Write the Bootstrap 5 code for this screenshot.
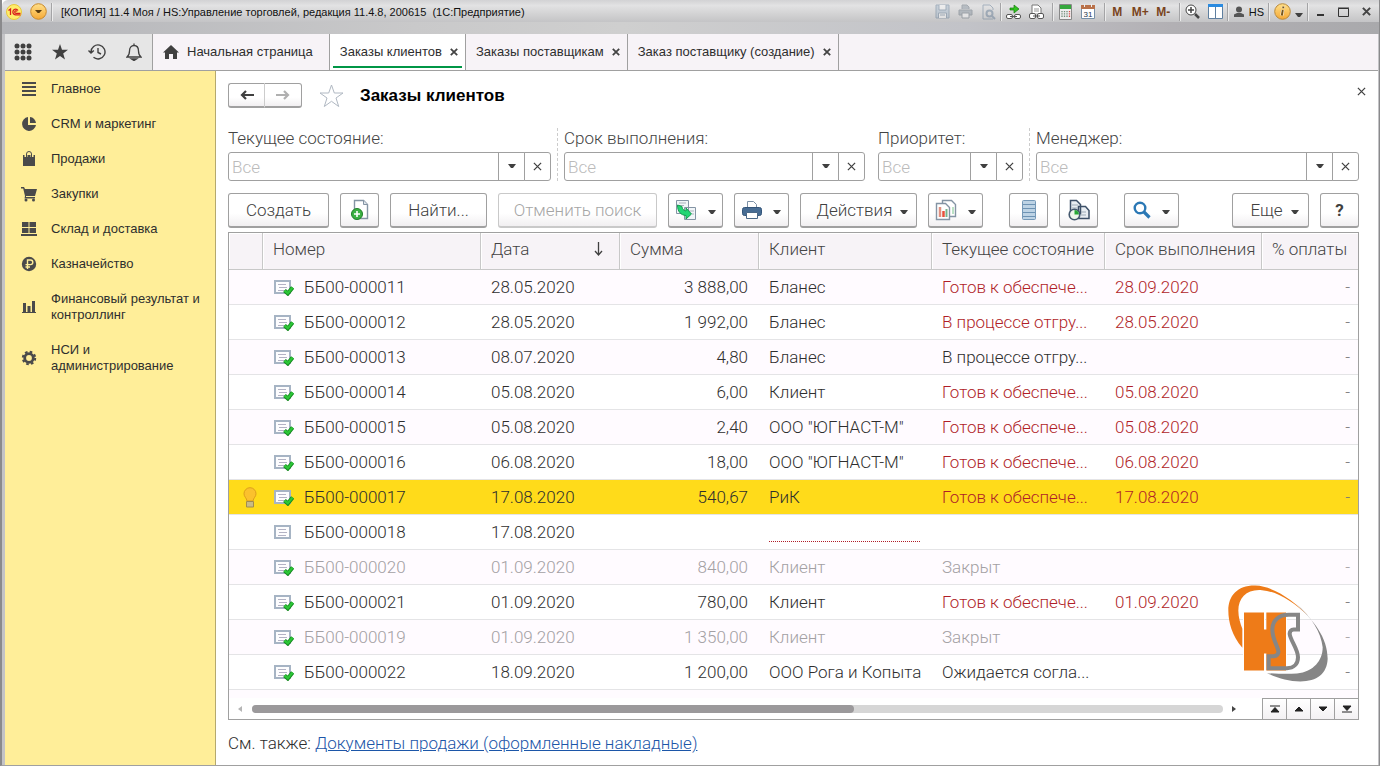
<!DOCTYPE html>
<html lang="ru">
<head>
<meta charset="utf-8">
<meta name="viewport" content="width=device-width, initial-scale=1">
<title>Заказы клиентов</title>
<link href="https://cdn.jsdelivr.net/npm/bootstrap@5.3.0/dist/css/bootstrap.min.css" rel="stylesheet">
<style>
:root{--line:#a0a0a0;--ink:#2e2e2e;--soft:#f7f3f7;--tint:#fffbff}
body{font-family:Roboto,"Liberation Sans",sans-serif;font-size:17px;font-weight:300;line-height:20px;color:var(--ink);background:#fff}
svg{display:block;flex:none}
.window{min-height:100vh;border-left:2px solid #8a8a8c;border-right:1px solid #8a8a8c;border-bottom:1px solid var(--line)}
.caption-bar{height:22px;background:linear-gradient(#d2d2d4,#e2e2e3 25%,#d0d0d1 70%,#c4c4c6);font:11px/22px "Liberation Sans",sans-serif;color:#111;padding:1px 1px 0 4px;border-top-left-radius:6px}
.caption-bar button,.plain{border:0;background:none;padding:0;color:inherit;display:flex;align-items:center;justify-content:center}
.caption-bar .tool{width:23px;height:22px}
.caption-bar .memo{font-weight:700;font-size:12px;color:#7a4420}
.caption-bar .rule{width:1px;height:18px;background:#a4a4a6;border-right:1px solid #ececec;box-sizing:content-box}
.faded{opacity:.4}
.glass{height:12px;background:linear-gradient(90deg,#b4b5b9,#c9c9ca 30%,#cfcfcf 45%,#c2c3c8 70%,#b2b0b4 85%,#a9a9ac)}
.frame{border-left:3px solid #c3c3c6;border-right:1px solid #c3c3c6}
.tabs-row{height:37px;background:var(--soft);border-bottom:1px solid var(--line);font:13px/20px "Liberation Sans",sans-serif}
.quick{width:148px;background:#e6e6e6;border-right:1px solid var(--line)}
.quick button{width:37px}
.tab-item{position:relative;border-right:1px solid var(--line);padding:0 7px 0 10px}
.tab-item a{color:var(--ink);text-decoration:none}
.tab-item.current{background:#fff}
.tab-item.current::after{content:"";position:absolute;left:3px;right:3px;bottom:2px;height:2px;background:#009646}
.side{width:211px;background:#fe9;border-right:1px solid #b5a96e;font:13px/16px "Liberation Sans",sans-serif}
.side a{display:flex;align-items:center;gap:14px;padding:10px 8px 9px 16px;color:var(--ink);text-decoration:none}
.page{padding:12px 19px 12px 12px;min-width:0}
.page-close{margin-right:-7px}
.btn-1c{height:35px;border:1px solid var(--line);border-bottom-width:2px;border-radius:3px;background:linear-gradient(#fff 60%,#f1eff1);color:#404040;font-size:17px;font-weight:300;line-height:20px;padding:0 10px;display:flex;align-items:center;justify-content:center;gap:11px;white-space:nowrap}
.btn-1c:disabled{color:#a5a5a5;border-color:#c9c9c9}
.btn-1c>svg+svg,.w-act svg,.w-more svg{margin-top:4px}
.icon-only{width:39px;padding:0}
.icon-menu{width:55px;padding:0}
.nav-pair .btn-1c{height:25px;width:37px;padding:0}
.nav-pair .btn-1c:first-child{border-radius:3px 0 0 3px;border-right-color:#ccc}
.nav-pair .btn-1c:last-child{border-radius:0 3px 3px 0;border-left:0}
h1{font:700 17px/24px "Liberation Sans",sans-serif;color:#000}
.filters{display:grid;grid-template-columns:323fr 301fr 145fr 323fr;column-gap:13px}
.filters label{display:block;line-height:20px;margin-bottom:4px;color:#444;white-space:nowrap}
.filters>div{position:relative}
.filters .split::before{content:"";position:absolute;left:-7px;top:0;bottom:0;border-left:1px dashed #ccc}
.filters .form-control{height:29px;min-width:0;border:1px solid var(--line);border-radius:3px;padding:0 3px;font-size:17px;font-weight:300;line-height:20px}
.filters .form-control::placeholder{color:#bbb}
.filters .btn{width:27px;border:1px solid var(--line);border-radius:3px;padding:0;display:flex;align-items:center;justify-content:center;background:#fff;color:#404040}
.toolbar{gap:11px;margin:12px 0 4px}
.toolbar .gap-before{margin-left:15px}
.w-create{width:101px}.w-find{width:97px}.w-undo{width:159px}.w-act{width:117px}.w-more{width:77px}
.w-act,.w-more{padding:0 6px 0 14px;gap:8px}
.grid-box{position:relative;border:1px solid var(--line)}
.orders{table-layout:fixed;border-collapse:separate;border-spacing:0;margin:0;color:var(--ink);--bs-table-bg:transparent}
.orders th{height:37px;background:var(--soft);border:1px solid #c8c8c8;border-width:0 1px 1px 0;box-shadow:inset 1px 1px #fff;font-weight:300;color:#444;padding:0 0 4px 10px;vertical-align:middle;white-space:nowrap}
.orders th:last-child,.orders td:last-child{border-right:0}
.orders td{height:35px;border:0;border-bottom:1px solid #e4e4e6;padding:0 0 0 10px;vertical-align:middle;white-space:nowrap;overflow:hidden}
.orders td.num{text-align:right;padding-right:11px}
.orders td.dash{color:#777;padding-right:8px}
.orders tbody tr:nth-child(odd){background:var(--tint)}
.orders tbody tr.chosen{background:#ffdb1a}
.orders .closed td{color:#a3a0a3}
.orders .late{color:#b01e28}
.cell{display:flex;align-items:center;gap:10px;padding-left:1px}
.need{border-bottom:1px dotted #b01e28;height:20px;margin-right:12px}
.tail{height:8px;background:var(--tint)}
.scroll-row{height:21px}
.track{height:8px;border-radius:4px;background:#d6d6d6}
.thumb{height:8px;border-radius:4px;background:#9b999b}
.steps button{width:24px;border:1px solid var(--line);border-width:1px 0 0 1px;background:linear-gradient(#fff,#f3f1f3)}
.brand{position:absolute;right:30px;bottom:37px}
.see-also{margin-top:13px}
.see-also a{color:#1c56a8}
</style>
</head>
<body>
<svg width="0" height="0" class="position-absolute" aria-hidden="true">
<defs>
<linearGradient id="gold" x1="0" y1="0" x2="0" y2="1"><stop offset="0" stop-color="#ffe08a"/><stop offset="1" stop-color="#f5a936"/></linearGradient>
<symbol id="doc" viewBox="0 0 20 17"><rect x="1" y="2" width="15" height="12" fill="#fdfdfe" stroke="#a6b4c4" stroke-width="2"/><path d="M4 5.500h8M5 8.500h8M4 11.500h8" stroke="#b3b3c4"/></symbol>
<symbol id="done" viewBox="0 0 20 17"><use href="#doc"/><path d="M10.500 11.500l3.300 3 4.800-6" fill="none" stroke="#138a1d" stroke-width="4"/><path d="M10.500 11.500l3.300 2.700 4.800-5.800" fill="none" stroke="#2cc637" stroke-width="2.300"/></symbol>
<symbol id="down" viewBox="0 0 8 5"><path d="M0 0h8L5 4H3z" fill="#404040"/></symbol>
<symbol id="cross" viewBox="0 0 10 10"><path d="M1 1l8 8M9 1L1 9" stroke="#404040" stroke-width="1.400"/></symbol>
<symbol id="crossb" viewBox="0 0 8 8"><path d="M.8.8l6.400 6.400M7.200.8L.8 7.200" stroke="#444" stroke-width="1.800"/></symbol>
</defs>
</svg>

<div class="window d-flex flex-column">
<header>
<div class="caption-bar d-flex align-items-center">
<svg width="16" height="16" viewBox="0 0 16 16"><circle cx="8" cy="8" r="7.500" fill="#ffed6b" stroke="#e8c83c"/><path d="M2.500 6.500l2-1.500v6M12 6.500a2.800 2.800 0 1 0-2.500 4.300h5M11 7.500a1.200 1.200 0 1 0-1 1.800h4.500" fill="none" stroke="#d81e1e" stroke-width="1.300"/></svg>
<button class="ms-2" aria-label="Меню"><svg width="17" height="17" viewBox="0 0 17 17"><circle cx="8.500" cy="8.500" r="7.800" fill="url(#gold)" stroke="#c98a2c"/><path d="M5 7h7L9.300 10H7.700z" fill="#5a3c10"/></svg></button>
<span class="rule ms-1 me-2"></span>
<span class="flex-grow-1 text-truncate">[КОПИЯ] 11.4 Моя / HS:Управление торговлей, редакция 11.4.8, 200615 &nbsp;(1С:Предприятие)</span>
<button class="tool faded" aria-label="Сохранить"><svg width="15" height="15" viewBox="0 0 15 15" fill="none" stroke="#4d6a88"><path d="M1 1h13v13H1z" fill="#9fb6cc"/><path d="M4 1v5h7V1M3.500 14V9h8v5M5 11h5" fill="#fff"/></svg></button>
<button class="tool faded" aria-label="Печать"><svg width="15" height="15" viewBox="0 0 15 15"><path d="M4 5V1h5l2 2v2M1 6h13v5H1z" fill="#7a8896" stroke="#4d5a68"/><path d="M4 9h7v5H4z" fill="#fff" stroke="#4d5a68"/></svg></button>
<button class="tool faded" aria-label="Просмотр"><svg width="15" height="16" viewBox="0 0 15 16" fill="none" stroke="#4d6a88"><path d="M12 15H2V1h7l3 3v2"/><circle cx="8.500" cy="9.500" r="3" stroke-width="2"/><path d="M11 12l3 3" stroke-width="2"/></svg></button>
<span class="rule"></span>
<button class="tool" aria-label="Перейти по ссылке"><svg width="17" height="16" viewBox="0 0 17 16"><rect x="1.500" y="10.500" width="6" height="4" rx="1.500" fill="#fff" stroke="#555"/><rect x="9.500" y="10.500" width="6" height="4" rx="1.500" fill="#fff" stroke="#555"/><path d="M5 12.500h7" stroke="#555"/><path d="M5 4h4V1l5 4-5 4V6H5z" fill="#30c51e" stroke="#16790d" stroke-width=".7"/></svg></button>
<button class="tool" aria-label="Получить ссылку"><svg width="17" height="16" viewBox="0 0 17 16"><path d="M4 9V1h6l3 3v5" fill="#fff" stroke="#777"/><path d="M6 5h5M6 7h5" stroke="#999"/><rect x="1.500" y="9.500" width="6" height="5" rx="1.500" fill="#fff" stroke="#555"/><rect x="9.500" y="9.500" width="6" height="5" rx="1.500" fill="#fff" stroke="#555"/><path d="M5 12h7" stroke="#555"/></svg></button>
<span class="rule ms-1"></span>
<button class="tool" aria-label="Калькулятор"><svg width="13" height="16" viewBox="0 0 13 16"><path d="M.5.5h12v15H.5z" fill="#eee" stroke="#888"/><path d="M1 1h11v4H1z" fill="#36a83e"/><path d="M3 7v7M5.500 7v7M8 7v7" stroke="#6d8c78" stroke-width="1.300" stroke-dasharray="1.300 1"/><path d="M10.500 7v7" stroke="#d44" stroke-width="1.300" stroke-dasharray="1.300 1"/></svg></button>
<button class="tool" aria-label="Календарь"><svg width="14" height="16" viewBox="0 0 14 16"><path d="M.5 1.500h13v13H.5z" fill="#fff" stroke="#7790a8"/><path d="M0 1h14v4H0z" fill="#b9714a"/><path d="M3.500 0v3M10.500 0v3" stroke="#eee"/><text x="7" y="12.500" font-size="8" text-anchor="middle" fill="#24374f">31</text></svg></button>
<span class="rule ms-1"></span>
<button class="tool memo">M</button><button class="tool memo">M+</button><button class="tool memo">M-</button>
<span class="rule ms-1"></span>
<button class="tool" aria-label="Масштаб"><svg width="15" height="15" viewBox="0 0 15 15" fill="none" stroke="#444"><circle cx="6" cy="6" r="5" fill="#fff"/><path d="M6 3v6M3 6h6" stroke-width="1.500"/><path d="M10 10l4 4" stroke-width="2.500"/></svg></button>
<button class="tool" aria-label="Окна"><svg width="15" height="15" viewBox="0 0 15 15"><path d="M.5.5h14v14H.5z" fill="#fff" stroke="#5f7f9f"/><path d="M0 0h15v3H0z" fill="#2b8be0"/><path d="M7.500 3v12" stroke="#5f7f9f"/></svg></button>
<span class="rule me-1"></span>
<svg width="12" height="12" viewBox="0 0 12 12" fill="#555"><circle cx="6" cy="3.500" r="3"/><path d="M1 11V8.500L4 7h4l3 1.500V11z"/></svg>
<span class="ms-1 me-1">HS</span>
<span class="rule me-1"></span>
<button aria-label="Информация"><svg width="17" height="17" viewBox="0 0 17 17"><circle cx="8.500" cy="8.500" r="7.800" fill="url(#gold)" stroke="#b98a3c"/><path d="M9.300 3.500v1.800M8.800 7l-1 5.500" stroke="#fff" stroke-width="3"/><path d="M9.300 3.500v1.800M8.800 7l-1 5.500" stroke="#77571c" stroke-width="2"/></svg></button>
<button class="ms-1 me-1 pt-2" aria-label="Параметры"><svg width="8" height="5"><use href="#down"/></svg></button>
<span class="rule"></span>
<button class="tool" aria-label="Свернуть"><svg width="11" height="11" viewBox="0 0 11 11"><path d="M2 9h7" stroke="#333" stroke-width="2"/></svg></button>
<button class="tool" aria-label="Развернуть"><svg width="11" height="10" viewBox="0 0 11 10"><path d="M.5 1.500h10v8H.5zM0 1h11" fill="none" stroke="#333"/></svg></button>
<button class="tool" aria-label="Закрыть"><svg width="9" height="9"><use href="#crossb"/></svg></button>
</div>
<div class="glass"></div>
</header>

<div class="frame flex-grow-1 d-flex flex-column">
<nav class="tabs-row d-flex">
<div class="quick d-flex">
<button class="plain" aria-label="Разделы"><svg width="18" height="18" viewBox="0 0 18 18" fill="#404040"><g id="dots"><circle cx="3" cy="3" r="2.500"/><circle cx="9" cy="3" r="2.500"/><circle cx="15" cy="3" r="2.500"/></g><use href="#dots" y="6"/><use href="#dots" y="12"/></svg></button>
<button class="plain" aria-label="Избранное"><svg width="16" height="16" viewBox="0 0 16 16" fill="#404040"><path d="M8 0l2 5.800h6L11.200 9.500 13 15.500 8 12l-5 3.500 1.800-6L0 5.800h6z"/></svg></button>
<button class="plain" aria-label="История"><svg width="18" height="16" viewBox="0 0 18 16" fill="none" stroke="#404040" stroke-width="1.400"><path d="M3 8a7 7 0 1 1 2.500 5.300M.5 6.500L3 9l2.800-2.500M10 4v4.500l3 1.500"/></svg></button>
<button class="plain" aria-label="Оповещения"><svg width="16" height="18" viewBox="0 0 16 18" fill="none" stroke="#404040" stroke-width="1.300"><path d="M1 14c2-1.500 2.500-3 2.500-6C3.500 4.500 5.500 2.500 8 2.500s4.500 2 4.500 5.500c0 3 .5 4.500 2.500 6zM8 .5v2"/><path d="M5.500 16h5L8 17.500z" fill="#404040"/></svg></button>
</div>
<div class="tab-item d-flex align-items-center gap-2 pe-3"><svg width="16" height="14" viewBox="0 0 16 14" fill="#404040"><path d="M8 0l8 7.500h-2V14H10V9H6v5H2V7.500H0z"/></svg><a href="#">Начальная страница</a></div>
<div class="tab-item current d-flex align-items-center gap-2"><a href="#">Заказы клиентов</a><button class="plain" aria-label="Закрыть вкладку"><svg width="8" height="8"><use href="#crossb"/></svg></button></div>
<div class="tab-item d-flex align-items-center gap-2"><a href="#">Заказы поставщикам</a><button class="plain" aria-label="Закрыть вкладку"><svg width="8" height="8"><use href="#crossb"/></svg></button></div>
<div class="tab-item d-flex align-items-center gap-2"><a href="#">Заказ поставщику (создание)</a><button class="plain" aria-label="Закрыть вкладку"><svg width="8" height="8"><use href="#crossb"/></svg></button></div>
</nav>

<div class="d-flex flex-grow-1">
<nav class="side flex-shrink-0">
<a href="#"><svg width="16" height="16" viewBox="0 0 16 16"><path d="M1 2h14M1 6h14M1 10h14M1 14h14" stroke="#4a4a4a" stroke-width="2"/></svg>Главное</a>
<a href="#"><svg width="16" height="16" viewBox="0 0 16 16" fill="#4a4a4a"><path d="M7 1a7 7 0 1 0 8 8H7z"/><path d="M9 1v6h6A6.500 6.500 0 0 0 9 1z"/></svg>CRM и маркетинг</a>
<a href="#"><svg width="16" height="16" viewBox="0 0 16 16"><path d="M2 4h12v11H2z" fill="#4a4a4a"/><path d="M5 6V3.500a3 3 0 0 1 6 0V6" fill="none" stroke="#fe9" stroke-width="3"/><path d="M5.500 6V3a2.500 2.500 0 0 1 5 0v3" fill="none" stroke="#4a4a4a"/></svg>Продажи</a>
<a href="#"><svg width="16" height="16" viewBox="0 0 16 16" fill="#4a4a4a"><path d="M0 1h3l1 2h12l-2 7H5v1h9v1.500H3.500L4 10 2.200 2.500H0z"/><circle cx="5" cy="14" r="1.500"/><circle cx="12.500" cy="14" r="1.500"/></svg>Закупки</a>
<a href="#"><svg width="16" height="16" viewBox="0 0 16 16" fill="#4a4a4a"><path d="M1 1h6.500v5H1zM8.500 1H15v5H8.500zM1 7h6.500v5H1zM8.500 7H15v5H8.500zM0 13h16v2H0z"/></svg>Склад и доставка</a>
<a href="#"><svg width="16" height="16" viewBox="0 0 16 16"><circle cx="8" cy="8" r="7.200" fill="#4a4a4a"/><path d="M6.500 13V4h3a2.300 2.300 0 0 1 0 4.600h-5M4.500 11H9" fill="none" stroke="#fe9" stroke-width="1.400"/></svg>Казначейство</a>
<a href="#"><svg width="16" height="16" viewBox="0 0 16 16" fill="#4a4a4a"><path d="M2 4h3v9H2zM6.500 7h3v6h-3zM11 2h3v11h-3zM1 13h14v1H1z"/></svg>Финансовый результат и контроллинг</a>
<a href="#"><svg width="16" height="16" viewBox="0 0 16 16" fill="none" stroke="#4a4a4a"><circle cx="8" cy="8" r="4.300" stroke-width="2.800"/><circle cx="8" cy="8" r="6.200" stroke-width="2" stroke-dasharray="2.600 2.270"/></svg>НСИ и администрирование</a>
</nav>

<main class="page flex-grow-1">
<div class="d-flex align-items-center mb-3">
<div class="nav-pair d-flex">
<button class="btn-1c" aria-label="Назад"><svg width="14" height="10" viewBox="0 0 14 10"><path d="M14 5H3M6 1L2 5l4 4" fill="none" stroke="#404040" stroke-width="2.200"/></svg></button>
<button class="btn-1c" aria-label="Вперед"><svg width="14" height="10" viewBox="0 0 14 10"><path d="M0 5h11M8 1l4 4-4 4" fill="none" stroke="#b0b0b0" stroke-width="2.200"/></svg></button>
</div>
<button class="plain ms-3" aria-label="В избранное"><svg width="26" height="24" viewBox="0 0 26 24"><path d="M13.500 1l2.800 8H25l-7 5 2.700 8.500-7.200-5.200-7.200 5.200L9 14 2 9h8.700z" fill="#fff" stroke="#b0b8c2"/></svg></button>
<h1 class="mb-0 ms-3">Заказы клиентов</h1>
<button class="plain page-close ms-auto mb-2" aria-label="Закрыть"><svg width="9" height="9"><use href="#cross"/></svg></button>
</div>

<div class="filters pt-1 mt-1">
<div><label for="f1">Текущее состояние:</label><div class="input-group flex-nowrap"><input id="f1" class="form-control" placeholder="Все"><button class="btn" aria-label="Выбрать"><svg width="8" height="5"><use href="#down"/></svg></button><button class="btn" aria-label="Очистить"><svg width="9" height="9"><use href="#cross"/></svg></button></div></div>
<div class="split"><label for="f2">Срок выполнения:</label><div class="input-group flex-nowrap"><input id="f2" class="form-control" placeholder="Все"><button class="btn" aria-label="Выбрать"><svg width="8" height="5"><use href="#down"/></svg></button><button class="btn" aria-label="Очистить"><svg width="9" height="9"><use href="#cross"/></svg></button></div></div>
<div><label for="f3">Приоритет:</label><div class="input-group flex-nowrap"><input id="f3" class="form-control" placeholder="Все"><button class="btn" aria-label="Выбрать"><svg width="8" height="5"><use href="#down"/></svg></button><button class="btn" aria-label="Очистить"><svg width="9" height="9"><use href="#cross"/></svg></button></div></div>
<div class="split"><label for="f4">Менеджер:</label><div class="input-group flex-nowrap"><input id="f4" class="form-control" placeholder="Все"><button class="btn" aria-label="Выбрать"><svg width="8" height="5"><use href="#down"/></svg></button><button class="btn" aria-label="Очистить"><svg width="9" height="9"><use href="#cross"/></svg></button></div></div>
</div>

<div class="toolbar d-flex">
<button class="btn-1c w-create">Создать</button>
<button class="btn-1c icon-only" aria-label="Создать копированием"><svg width="20" height="22" viewBox="0 0 20 22"><path d="M4.500 1.500h9l4 4v14h-13z" fill="#fff" stroke="#8494a4" stroke-width="1.400"/><path d="M13.500 1.500v4h4" fill="#dde4ea" stroke="#8494a4"/><circle cx="7" cy="15" r="5.500" fill="#3bb143" stroke="#1d7f28"/><path d="M7 12v6M4 15h6" stroke="#fff" stroke-width="1.600"/></svg></button>
<button class="btn-1c w-find">Найти...</button>
<button class="btn-1c w-undo" disabled>Отменить поиск</button>
<button class="btn-1c icon-menu" aria-label="Создать на основании"><svg width="22" height="22" viewBox="0 0 22 22"><path d="M1.500 1.500h12v13h-12zM9.500 8.500h11v12h-11z" fill="#f1f5f8" stroke="#8494a4"/><path d="M4 4h7M4 6.500h5M14 12h5M17 15h2" stroke="#a9b3bd"/><path d="M2.500 6l4.500 1.500c0 2.500 1.500 4 4 4.500V9l5.500 6-5.500 5v-3.500C5.500 16 2.500 12.500 2.500 6z" fill="#23d674" stroke="#159a50"/></svg><svg width="8" height="5"><use href="#down"/></svg></button>
<button class="btn-1c icon-menu" aria-label="Печать"><svg width="20" height="20" viewBox="0 0 20 20"><path d="M5.500 8V1.500h6l3 3V8" fill="#fff" stroke="#7d91a6"/><rect x=".5" y="7.500" width="19" height="8" rx="2" fill="#476c93" stroke="#33557a"/><path d="M4.500 12.500h11v6h-11z" fill="#fff" stroke="#4a6786"/></svg><svg width="8" height="5"><use href="#down"/></svg></button>
<button class="btn-1c w-act">Действия<svg width="8" height="5"><use href="#down"/></svg></button>
<button class="btn-1c icon-menu" aria-label="Отчеты"><svg width="22" height="22" viewBox="0 0 22 22"><path d="M7.500 1.500h9l4 4v12h-13z" fill="#fff" stroke="#8494a4" stroke-width="1.400"/><path d="M1.500 4.500h9l4 4v12h-13z" fill="#fff" stroke="#8494a4" stroke-width="1.400"/><path d="M5 8v10" stroke="#e09080" stroke-width="2.500"/><path d="M8.500 12v6" stroke="#e8513b" stroke-width="2.500"/><path d="M11.500 10v8" stroke="#79b58c" stroke-width="2"/><path d="M18 8v7" stroke="#79c58c"/></svg><svg width="8" height="5"><use href="#down"/></svg></button>
<button class="btn-1c icon-only gap-before" aria-label="Список"><svg width="14" height="20" viewBox="0 0 14 20"><rect x=".5" y=".5" width="13" height="19" rx="1" fill="#bdd3e5" stroke="#7599b8"/><path d="M1 4.500h12M1 8.500h12M1 12.500h12M1 16.500h12" stroke="#6d93b4"/></svg></button>
<button class="btn-1c icon-only" aria-label="История изменений"><svg width="22" height="22" viewBox="0 0 22 22"><path d="M2.500 1.500h6l4 4v9h-10zM10.500 7.500h7l3.500 4v8H10.500z" fill="#e8edf2" stroke="#3d5068" stroke-width="1.500"/><path d="M4 6h6M4 9h6M13 13h5M13 16h5" stroke="#9daab6"/><circle cx="6.500" cy="15.500" r="5.300" fill="#eef6ec" stroke="#44586e" stroke-width="1.600"/><path d="M6.500 11v4.500h4.500A4.500 4.500 0 0 0 6.500 11z" fill="#27a837"/></svg></button>
<button class="btn-1c icon-menu gap-before" aria-label="Поиск"><svg width="18" height="18" viewBox="0 0 18 18" fill="none" stroke="#2b78b5"><circle cx="7" cy="7" r="5.300" stroke-width="2.400"/><path d="M11 11l5.500 5.500" stroke-width="3.200"/></svg><svg width="8" height="5"><use href="#down"/></svg></button>
<button class="btn-1c w-more ms-auto">Еще<svg width="8" height="5"><use href="#down"/></svg></button>
<button class="btn-1c icon-only fw-bold">?</button>
</div>

<div class="grid-box">
<table class="table orders">
<colgroup><col style="width:34px"><col style="width:218px"><col style="width:139px"><col style="width:139px"><col style="width:173px"><col style="width:173px"><col style="width:157px"><col style="width:96px"></colgroup>
<thead><tr><th></th><th>Номер</th><th><span class="d-flex align-items-center justify-content-between pe-3">Дата<svg width="9" height="14" viewBox="0 0 9 14"><path d="M4.500 0v12M1 9l3.500 4L8 9" fill="none" stroke="#404040" stroke-width="1.300"/></svg></span></th><th>Сумма</th><th>Клиент</th><th>Текущее состояние</th><th>Срок выполнения</th><th>% оплаты</th></tr></thead>
<tbody>
<tr><td></td><td><span class="cell"><svg width="20" height="17"><use href="#done"/></svg>ББ00-000011</span></td><td>28.05.2020</td><td class="num">3 888,00</td><td>Бланес</td><td class="late">Готов к обеспече...</td><td class="late">28.09.2020</td><td class="num dash">-</td></tr>
<tr><td></td><td><span class="cell"><svg width="20" height="17"><use href="#done"/></svg>ББ00-000012</span></td><td>28.05.2020</td><td class="num">1 992,00</td><td>Бланес</td><td class="late">В процессе отгру...</td><td class="late">28.05.2020</td><td class="num dash">-</td></tr>
<tr><td></td><td><span class="cell"><svg width="20" height="17"><use href="#done"/></svg>ББ00-000013</span></td><td>08.07.2020</td><td class="num">4,80</td><td>Бланес</td><td>В процессе отгру...</td><td></td><td class="num dash">-</td></tr>
<tr><td></td><td><span class="cell"><svg width="20" height="17"><use href="#done"/></svg>ББ00-000014</span></td><td>05.08.2020</td><td class="num">6,00</td><td>Клиент</td><td class="late">Готов к обеспече...</td><td class="late">05.08.2020</td><td class="num dash">-</td></tr>
<tr><td></td><td><span class="cell"><svg width="20" height="17"><use href="#done"/></svg>ББ00-000015</span></td><td>05.08.2020</td><td class="num">2,40</td><td>ООО "ЮГНАСТ-М"</td><td class="late">Готов к обеспече...</td><td class="late">05.08.2020</td><td class="num dash">-</td></tr>
<tr><td></td><td><span class="cell"><svg width="20" height="17"><use href="#done"/></svg>ББ00-000016</span></td><td>06.08.2020</td><td class="num">18,00</td><td>ООО "ЮГНАСТ-М"</td><td class="late">Готов к обеспече...</td><td class="late">06.08.2020</td><td class="num dash">-</td></tr>
<tr class="chosen"><td><svg class="ms-1" width="14" height="21" viewBox="0 0 14 21"><path d="M7 .7a6 6 0 0 1 6 6c0 3-2.500 4-3 7.300H4C3.500 10.700 1 9.700 1 6.700a6 6 0 0 1 6-6z" fill="#fbc12d" stroke="#dd9e1c"/><path d="M3.500 14.500h7v5.500h-7z" fill="#c9bb86" stroke="#a08c50"/></svg></td><td><span class="cell"><svg width="20" height="17"><use href="#done"/></svg>ББ00-000017</span></td><td>17.08.2020</td><td class="num">540,67</td><td>РиК</td><td class="late">Готов к обеспече...</td><td class="late">17.08.2020</td><td class="num dash">-</td></tr>
<tr><td></td><td><span class="cell"><svg width="20" height="17"><use href="#doc"/></svg>ББ00-000018</span></td><td>17.08.2020</td><td></td><td><div class="need"></div></td><td></td><td></td><td></td></tr>
<tr class="closed"><td></td><td><span class="cell"><svg width="20" height="17"><use href="#done"/></svg>ББ00-000020</span></td><td>01.09.2020</td><td class="num">840,00</td><td>Клиент</td><td>Закрыт</td><td></td><td class="num dash">-</td></tr>
<tr><td></td><td><span class="cell"><svg width="20" height="17"><use href="#done"/></svg>ББ00-000021</span></td><td>01.09.2020</td><td class="num">780,00</td><td>Клиент</td><td class="late">Готов к обеспече...</td><td class="late">01.09.2020</td><td class="num dash">-</td></tr>
<tr class="closed"><td></td><td><span class="cell"><svg width="20" height="17"><use href="#done"/></svg>ББ00-000019</span></td><td>01.09.2020</td><td class="num">1 350,00</td><td>Клиент</td><td>Закрыт</td><td></td><td class="num dash">-</td></tr>
<tr><td></td><td><span class="cell"><svg width="20" height="17"><use href="#done"/></svg>ББ00-000022</span></td><td>18.09.2020</td><td class="num">1 200,00</td><td>ООО Рога и Копыта</td><td>Ожидается согла...</td><td></td><td class="num dash">-</td></tr>
</tbody>
</table>
<div class="tail"></div>
<div class="scroll-row d-flex">
<div class="d-flex align-items-center flex-grow-1 gap-2 ps-2">
<svg width="7" height="8" viewBox="0 0 7 8"><path d="M5 1v6L1 4z" fill="#b5b5b5"/></svg>
<div class="track flex-grow-1"><div class="thumb" style="width:62%"></div></div>
<svg class="me-4" width="7" height="8" viewBox="0 0 7 8"><path d="M1 1v6l4-3z" fill="#444"/></svg>
</div>
<div class="steps d-flex">
<button class="plain" aria-label="В начало"><svg width="10" height="8" viewBox="0 0 10 8"><path d="M0 1h10M1 7l4-4.500L9 7z" fill="#222" stroke="#222"/></svg></button>
<button class="plain" aria-label="Вверх"><svg width="10" height="8" viewBox="0 0 10 8"><path d="M1 6l4-4 4 4z" fill="#222" stroke="#222"/></svg></button>
<button class="plain" aria-label="Вниз"><svg width="10" height="8" viewBox="0 0 10 8"><path d="M1 2l4 4 4-4z" fill="#222" stroke="#222"/></svg></button>
<button class="plain" aria-label="В конец"><svg width="10" height="8" viewBox="0 0 10 8"><path d="M0 7h10M1 1l4 4.500L9 1z" fill="#222" stroke="#222"/></svg></button>
</div>
</div>
<svg class="brand" width="100" height="97" viewBox="443 74 300 290" role="img" aria-label="HS">
<path d="M486 262C455 225 444 185 444 150C444 105 472 74 525 75C580 77 640 120 684 166C640 125 590 92 545 89C500 85 474 112 474 150C474 170 480 190 486 205Z" fill="#ee7b18"/>
<path d="M645 128C700 180 742 230 742 295C740 340 710 363 660 363C625 363 590 352 560 338C600 340 620 341 650 339C700 333 727 300 727 260C722 215 695 170 645 128Z" fill="#868686"/>
<path d="M488 153H554V206H557V153H620V333H554V278H554V333H488Z" fill="#fff"/>
<path d="M491 156H551V207H558V156H617V330H558V279H551V330H491Z" fill="#ee7b18"/>
<path d="M653 163V207H640C632 207 628 213 628 220C630 240 653 265 653 290C653 310 640 323 620 323H565V287H580C590 287 595 280 594 272C592 255 575 235 576 205C577 180 595 163 625 163Z" fill="none" stroke="#868686" stroke-width="12"/>
</svg>
</div>
<div class="see-also">См. также: <a href="#">Документы продажи (оформленные накладные)</a></div>
</main>
</div>
</div>
</div>
<script src="https://cdn.jsdelivr.net/npm/bootstrap@5.3.0/dist/js/bootstrap.bundle.min.js"></script>
</body>
</html>
